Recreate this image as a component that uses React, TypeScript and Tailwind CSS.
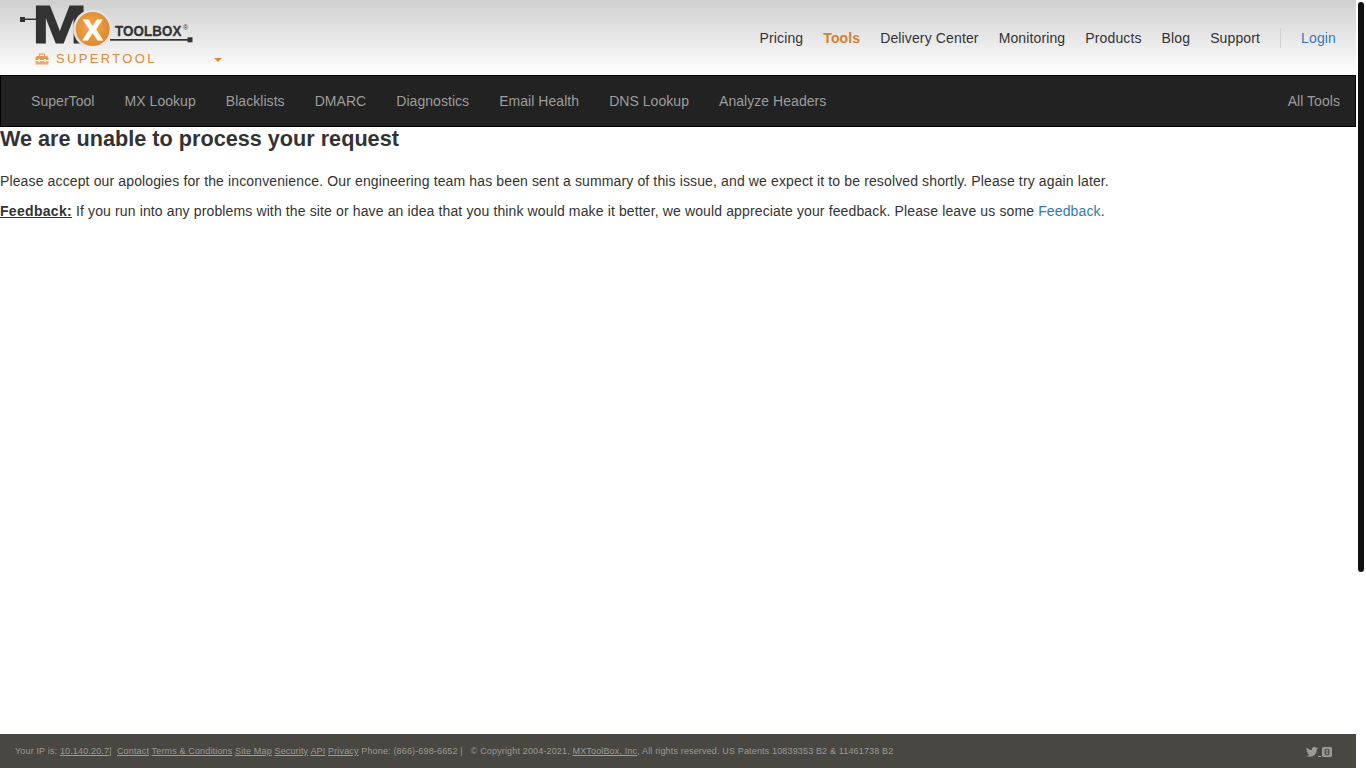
import React from "react";

const top = ["Pricing", "Tools", "Delivery Center", "Monitoring", "Products", "Blog", "Support"];
const sub = ["SuperTool", "MX Lookup", "Blacklists", "DMARC", "Diagnostics", "Email Health", "DNS Lookup", "Analyze Headers"];

function Logo() {
  return (
    <svg width="176" height="42" viewBox="0 0 176 42" className="block">
      <defs>
        <radialGradient id="o" cx="0.45" cy="0.45" r="0.6">
          <stop offset="0" stopColor="#f2a94a" />
          <stop offset="1" stopColor="#dc872f" />
        </radialGradient>
      </defs>
      <rect x="0" y="13" width="5" height="5" fill="#333" />
      <rect x="5" y="14.5" width="12" height="1.5" fill="#333" />
      <text x="0" y="0" transform="translate(12.2 39.4) scale(1.5 1.22)" fontFamily="'Liberation Sans', sans-serif" fontWeight="bold" fontSize="44" fill="#333" stroke="#333" strokeWidth="1">M</text>
      <circle cx="72.7" cy="25" r="19.5" fill="#e2e2e2" />
      <circle cx="72.7" cy="25" r="17" fill="url(#o)" />
      <text x="72.7" y="35.5" textAnchor="middle" fontFamily="'Liberation Sans', sans-serif" fontWeight="bold" fontSize="30" fill="#fff" stroke="#fff" strokeWidth="0.8">X</text>
      <text x="95" y="32" fontFamily="'Liberation Sans', sans-serif" fontWeight="bold" fontSize="15.5" fill="#333" stroke="#333" strokeWidth="0.3" textLength="66.5" lengthAdjust="spacingAndGlyphs">TOOLBOX</text>
      <text x="163" y="26" fontFamily="'Liberation Sans', sans-serif" fontSize="7" fill="#333">®</text>
      <rect x="90" y="35" width="79" height="1.7" fill="#333" />
      <rect x="167.5" y="33.3" width="5" height="5" fill="#333" />
    </svg>
  );
}

function Toolbox() {
  return (
    <svg width="14" height="12" viewBox="0 0 14 12" className="block">
      <path d="M4.5 3V1.2h5V3" fill="none" stroke="#e2a468" strokeWidth="1.2" />
      <path d="M2.5 3h9q2 0 2 2.5V7H.5V5.5Q.5 3 2.5 3z" fill="#e39a50" />
      <path d="M.5 8h13v3.5H.5z" fill="#e9ab6c" />
      <rect x="3" y="6" width="2" height="3" fill="#f6e2cf" />
      <rect x="9" y="6" width="2" height="3" fill="#f6e2cf" />
    </svg>
  );
}

export default function App() {
  return (
    <div className="relative h-screen w-full overflow-hidden bg-white font-['Liberation_Sans',sans-serif] text-[14px] tracking-[0.13px] text-[#333]">
      <div className="flex h-full w-[1356px] flex-col">
        <header className="flex h-[75px] shrink-0 items-start justify-between bg-gradient-to-b from-[#d0d0d0] to-white pl-5 pr-5">
          <div className="w-[202px]">
            <div className="pt-1">
              <Logo />
            </div>
            <div className="mt-[5px] flex h-[16px] items-center pl-[15px]">
              <Toolbox />
              <span className="ml-[7px] text-[13px] tracking-[2.35px] text-[#e08a35]">SUPERTOOL</span>
              <span className="ml-auto mt-[1px] h-0 w-0 border-x-[4px] border-t-[4px] border-x-transparent border-t-[#e08a35]" />
            </div>
          </div>
          <nav className="flex h-[76px] items-center">
            <div className="flex items-center gap-5">
              {top.map((t) => (
                <span key={t} className={t === "Tools" ? "font-bold text-[#d38232]" : "text-[#333]"}>
                  {t}
                </span>
              ))}
            </div>
            <span className="mx-5 h-5 w-px bg-[#cfcfcf]" />
            <span className="text-[#337ab7]">Login</span>
          </nav>
        </header>

        <nav className="flex h-[52px] shrink-0 items-center justify-between border border-black bg-[#222] pl-[30px] pr-[15px] tracking-[0.05px] text-[#9d9d9d]">
          <div className="flex items-center gap-[30px]">
            {sub.map((s) => (
              <span key={s}>{s}</span>
            ))}
          </div>
          <span>All Tools</span>
        </nav>

        <main className="flex-1">
          <h1 className="mt-[-1px] text-[21.65px] leading-[26px] font-bold tracking-normal text-[#333]">We are unable to process your request</h1>
          <p className="mt-[19px] leading-5">
            Please accept our apologies for the inconvenience. Our engineering team has been sent a summary of this issue, and we expect it to be resolved shortly. Please try again later.
          </p>
          <p className="mt-[10px] leading-5">
            <b className="tracking-[0.3px] underline">Feedback:</b> If you run into any problems with the site or have an idea that you think would make it better, we would appreciate your feedback. Please leave us some <span className="text-[#337ab7]">Feedback</span>.
          </p>
        </main>

        <footer className="flex h-[34px] shrink-0 items-center justify-between bg-[#484741] pl-[15px] pr-[24px] pt-px text-[9px] tracking-[0.155px] whitespace-pre text-[#9c9c96]">
          <div>
            Your IP is: <u>10.140.20.7</u>|  <u>Contact</u> <u>Terms &amp; Conditions</u> <u>Site Map</u> <u>Security</u> <u>API</u> <u>Privacy</u> Phone: (866)-698-6652 |   © Copyright 2004-2021, <u>MXToolBox, Inc</u>, All rights reserved. US Patents 10839353 B2 &amp; 11461738 B2
          </div>
          <div className="flex items-center">
            <svg width="12" height="10" viewBox="0 0 24 20" fill="#9c9c96">
              <path d="M24 2.4a10 10 0 0 1-2.8.8 5 5 0 0 0 2.2-2.7 10 10 0 0 1-3.1 1.2A4.9 4.9 0 0 0 11.9 6.2 14 14 0 0 1 1.7.9a4.9 4.9 0 0 0 1.5 6.6 5 5 0 0 1-2.2-.6c0 2.4 1.7 4.4 3.9 4.9a5 5 0 0 1-2.2.1 4.9 4.9 0 0 0 4.6 3.4A9.9 9.9 0 0 1 0 17.3 14 14 0 0 0 7.5 19.5c9.1 0 14.3-7.7 14-14.6A10 10 0 0 0 24 2.4z" />
            </svg>
            <span className="mt-[9px] h-px w-[3px] bg-[#9c9c96]" />
            <svg width="10" height="10" viewBox="0 0 11 11" className="ml-px">
              <rect width="11" height="11" rx="2" fill="#9c9c96" />
              <rect x="3.5" y="2.5" width="4" height="6" rx="1" fill="none" stroke="#484741" strokeWidth="1.3" />
              <path d="M3.5 5.5h4" stroke="#484741" strokeWidth="1" />
            </svg>
          </div>
        </footer>
      </div>
      <div className="absolute top-[2px] right-[2px] h-[570px] w-[6px] rounded-[3px] bg-[#111]" />
    </div>
  );
}
